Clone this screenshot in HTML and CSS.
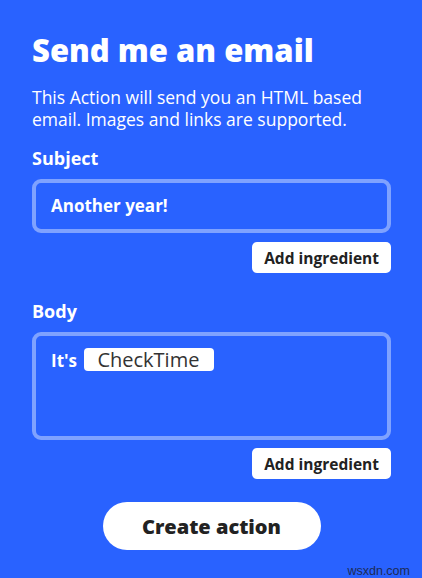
FILE: index.html
```html
<!DOCTYPE html>
<html lang="en">
<head>
<meta charset="utf-8">
<title>Send me an email</title>
<link rel="stylesheet" href="styles.css">
</head>
<body>
<main class="action">
  <h1 class="title">Send me an email</h1>
  <p class="desc">This Action will send you an HTML based email. Images and links are supported.</p>

  <section class="field">
    <label class="label">Subject</label>
    <div class="input input-line">Another year!</div>
    <div class="tools"><button class="ingredient">Add ingredient</button></div>
  </section>

  <section class="field field-body">
    <label class="label">Body</label>
    <div class="input input-area">It's <span class="chip">CheckTime</span></div>
    <div class="tools"><button class="ingredient">Add ingredient</button></div>
  </section>

  <div class="submit"><button class="create">Create action</button></div>
  <div class="mark">wsxdn.com</div>
</main>
</body>
</html>
```

FILE: styles.css
```css
html, body {
  margin: 0;
  padding: 0;
  background: #2962ff;
}

body {
  width: 422px;
  height: 578px;
  overflow: hidden;
  font-family: "Open Sans", Lato, sans-serif;
  color: #fff;
}

.action {
  padding: 30px 31px 0 32px;
  display: flex;
  flex-direction: column;
  height: 548px;
}

.title {
  margin: 0;
  font-size: 31px;
  font-weight: 800;
  line-height: 40px;
}

.desc {
  margin: 16px 0 0;
  font-size: 17.5px;
  line-height: 22px;
}

.field {
  display: flex;
  flex-direction: column;
}

.label {
  margin-top: 16px;
  font-size: 18px;
  font-weight: 700;
  line-height: 25px;
}

.field-body .label {
  margin-top: 26px;
}

.input {
  margin-top: 8px;
  border: 4px solid #7fa2ff;
  border-radius: 9px;
  padding: 0 15px;
  font-size: 17px;
  font-weight: 700;
}

.input-line {
  height: 46px;
  line-height: 46px;
}

.input-area {
  box-sizing: border-box;
  height: 108px;
  padding-top: 12px;
  line-height: 26px;
}

.chip {
  display: inline-block;
  background: #fff;
  color: #333;
  font-size: 20px;
  font-weight: 400;
  border-radius: 4px;
  padding: 0 15px 0 13px;
  line-height: 23px;
  margin-left: 3px;
}

.tools {
  display: flex;
  justify-content: flex-end;
  margin-top: 9px;
}

.field-body .tools {
  margin-top: 8px;
}

.ingredient {
  border: 0;
  background: #fff;
  color: #222;
  font-family: inherit;
  font-size: 15.5px;
  font-weight: 700;
  height: 31px;
  padding: 0 12px;
  border-radius: 5px;
}

.submit {
  display: flex;
  justify-content: center;
  margin-top: 23px;
}

.create {
  border: 0;
  background: #fff;
  color: #222;
  font-family: inherit;
  font-size: 20px;
  font-weight: 800;
  width: 218px;
  height: 48px;
  border-radius: 24px;
}

.mark {
  margin-top: auto;
  align-self: flex-end;
  font-family: "Liberation Sans", sans-serif;
  font-size: 12.5px;
  color: #1c2b55;
  margin-right: -19px;
}
```
